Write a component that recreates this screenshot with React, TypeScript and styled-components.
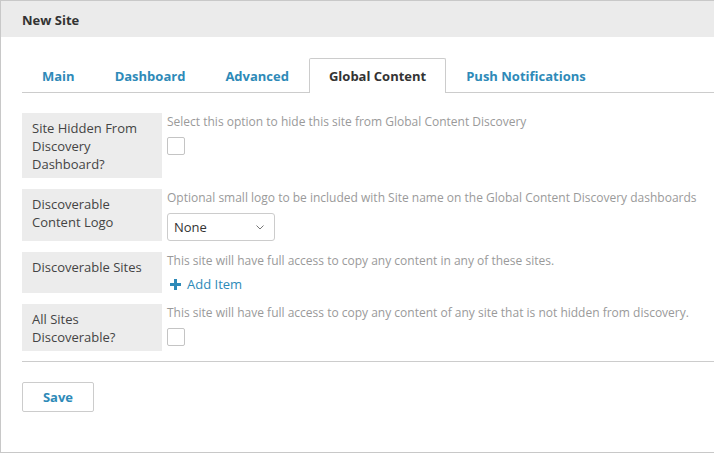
import React, { useState } from "react";
import styled, { createGlobalStyle } from "styled-components";

const GlobalStyle = createGlobalStyle`
  html, body {
    margin: 0;
    padding: 0;
    background: #fff;
  }
  body {
    font-family: "Open Sans", "Liberation Sans", sans-serif;
    color: #333;
  }
  * {
    box-sizing: border-box;
  }
`;

const Panel = styled.div`
  width: 714px;
  height: 453px;
  border: 1px solid #c8c8c8;
  border-right: none;
  overflow: hidden;
`;

const Header = styled.div`
  height: 36px;
  line-height: 38px;
  background: #ebebeb;
  padding-left: 21px;
  font-size: 13px;
  font-weight: 700;
  color: #333;
`;

const Body = styled.div`
  padding: 21px 0 0 21px;
`;

const TabBar = styled.div`
  display: flex;
  height: 35px;
  border-bottom: 1px solid #cccccc;
`;

const Tab = styled.button<{ $active?: boolean }>`
  height: 35px;
  margin-bottom: -1px;
  padding: 0 19px;
  border: 1px solid ${({ $active }) => ($active ? "#cccccc" : "transparent")};
  border-bottom: none;
  border-radius: 2px 2px 0 0;
  background: ${({ $active }) => ($active ? "#fff" : "transparent")};
  font-family: inherit;
  font-size: 13px;
  font-weight: 700;
  color: ${({ $active }) => ($active ? "#333" : "#2e8ab8")};
  cursor: pointer;
`;

const Rows = styled.div`
  display: flex;
  flex-direction: column;
  gap: 11px;
  padding-top: 20px;
`;

const Row = styled.div`
  display: flex;
  gap: 5px;
`;

const Label = styled.div`
  width: 140px;
  flex-shrink: 0;
  background: #ececec;
  padding: 6px 10px 5px 10px;
  font-size: 13px;
  line-height: 18px;
  color: #444;
`;

const Field = styled.div`
  display: flex;
  flex-direction: column;
  align-items: flex-start;
`;

const Help = styled.div`
  font-size: 12px;
  line-height: 17px;
  color: #9a9a9a;
  white-space: nowrap;
`;

const Checkbox = styled.span<{ $checked?: boolean }>`
  display: block;
  width: 18px;
  height: 18px;
  margin-top: 7px;
  border: 1px solid #c4c4c4;
  border-radius: 2px;
  background: ${({ $checked }) => ($checked ? "#2e8ab8" : "#fff")};
  cursor: pointer;
`;

const Select = styled.div`
  display: flex;
  align-items: center;
  justify-content: space-between;
  width: 108px;
  height: 28px;
  margin-top: 7px;
  padding: 0 10px 0 6px;
  border: 1px solid #cccccc;
  border-radius: 3px;
  font-size: 13px;
  color: #333;
`;

const AddLink = styled.a`
  display: flex;
  align-items: center;
  gap: 6px;
  margin-top: 6px;
  margin-left: 3px;
  font-size: 13px;
  line-height: 18px;
  color: #2e8ab8;
  cursor: pointer;
`;

const Divider = styled.hr`
  margin: 10px 0 0 0;
  border: none;
  border-top: 1px solid #cccccc;
`;

const SaveButton = styled.button`
  margin-top: 20px;
  width: 72px;
  height: 30px;
  border: 1px solid #cccccc;
  border-radius: 2px;
  background: #fff;
  font-family: inherit;
  font-size: 13px;
  font-weight: 700;
  color: #2e8ab8;
  cursor: pointer;
`;

const tabs = ["Main", "Dashboard", "Advanced", "Global Content", "Push Notifications"];

const Chevron = () => (
  <svg width="8" height="5" viewBox="0 0 8 5" fill="none">
    <path d="M0.5 0.5 L4 4 L7.5 0.5" stroke="#777" strokeWidth="1" />
  </svg>
);

const Plus = () => (
  <svg width="11" height="11" viewBox="0 0 11 11">
    <path d="M4 0h3v4h4v3H7v4H4V7H0V4h4z" fill="#2e8ab8" />
  </svg>
);

export default function App() {
  const [active, setActive] = useState("Global Content");
  const [hidden, setHidden] = useState(false);
  const [allSites, setAllSites] = useState(false);

  return (
    <>
      <GlobalStyle />
      <Panel>
        <Header>New Site</Header>
        <Body>
          <TabBar>
            {tabs.map((t) => (
              <Tab key={t} $active={t === active} onClick={() => setActive(t)}>
                {t}
              </Tab>
            ))}
          </TabBar>

          <Rows>
            <Row>
              <Label>Site Hidden From Discovery Dashboard?</Label>
              <Field>
                <Help>Select this option to hide this site from Global Content Discovery</Help>
                <Checkbox $checked={hidden} onClick={() => setHidden(!hidden)} />
              </Field>
            </Row>
            <Row>
              <Label>Discoverable Content Logo</Label>
              <Field>
                <Help>Optional small logo to be included with Site name on the Global Content Discovery dashboards</Help>
                <Select>
                  None
                  <Chevron />
                </Select>
              </Field>
            </Row>
            <Row>
              <Label>Discoverable Sites</Label>
              <Field>
                <Help>This site will have full access to copy any content in any of these sites.</Help>
                <AddLink>
                  <Plus />
                  Add Item
                </AddLink>
              </Field>
            </Row>
            <Row>
              <Label>All Sites Discoverable?</Label>
              <Field>
                <Help>This site will have full access to copy any content of any site that is not hidden from discovery.</Help>
                <Checkbox $checked={allSites} onClick={() => setAllSites(!allSites)} />
              </Field>
            </Row>
          </Rows>

          <Divider />
          <SaveButton>Save</SaveButton>
        </Body>
      </Panel>
    </>
  );
}
